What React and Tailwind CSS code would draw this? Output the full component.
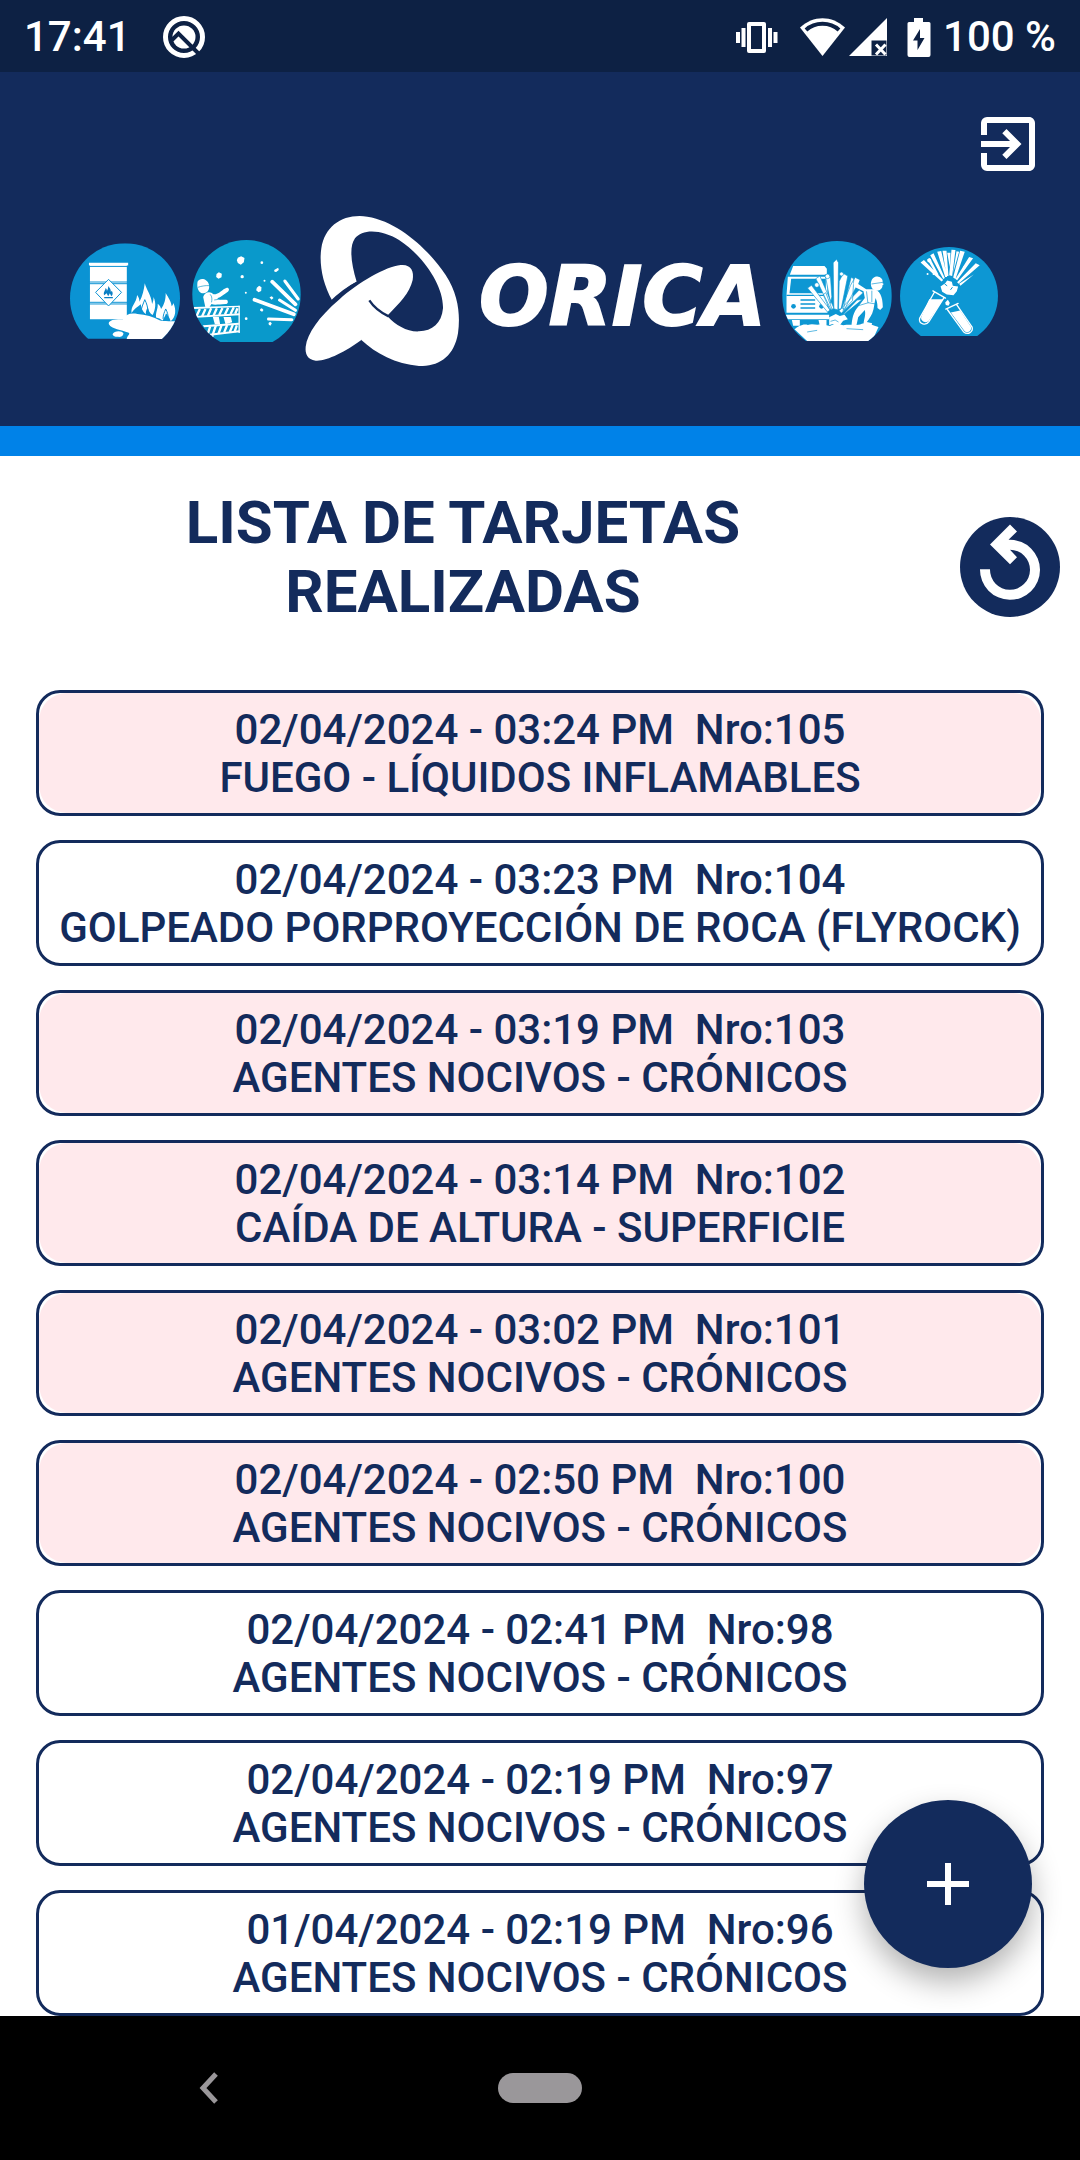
import { MdAdd, MdExitToApp } from "react-icons/md";

const cards = [
  { when: "02/04/2024 - 03:24 PM", nro: 105, name: "FUEGO - LÍQUIDOS INFLAMABLES", alert: true },
  { when: "02/04/2024 - 03:23 PM", nro: 104, name: "GOLPEADO PORPROYECCIÓN DE ROCA (FLYROCK)", alert: false },
  { when: "02/04/2024 - 03:19 PM", nro: 103, name: "AGENTES NOCIVOS - CRÓNICOS", alert: true },
  { when: "02/04/2024 - 03:14 PM", nro: 102, name: "CAÍDA DE ALTURA - SUPERFICIE", alert: true },
  { when: "02/04/2024 - 03:02 PM", nro: 101, name: "AGENTES NOCIVOS - CRÓNICOS", alert: true },
  { when: "02/04/2024 - 02:50 PM", nro: 100, name: "AGENTES NOCIVOS - CRÓNICOS", alert: true },
  { when: "02/04/2024 - 02:41 PM", nro: 98, name: "AGENTES NOCIVOS - CRÓNICOS", alert: false },
  { when: "02/04/2024 - 02:19 PM", nro: 97, name: "AGENTES NOCIVOS - CRÓNICOS", alert: false },
  { when: "01/04/2024 - 02:19 PM", nro: 96, name: "AGENTES NOCIVOS - CRÓNICOS", alert: false },
];

const NAVY = "#132b5c";
const STATUS = "#0d2144";

function StatusBar() {
  return (
    <div className="flex h-[72px] items-center justify-between bg-[#0d2144] px-6 pt-0.5 text-[42px] leading-[48px] font-medium text-white">
      <div className="flex items-center gap-8">
        <span>17:41</span>
        <svg width="42" height="42" viewBox="0 0 42 42" fill="none" aria-hidden="true">
          <circle cx="21" cy="21" r="18.5" stroke="#fff" strokeWidth="5" />
          <circle cx="21" cy="21" r="11.5" fill="#fff" />
          <path d="M9 24l6.500-6.500L37 39" stroke={STATUS} strokeWidth="4" />
        </svg>
      </div>
      <div className="flex items-center">
        <svg className="mr-[22px]" width="42" height="32" viewBox="0 0 42 32" fill="#fff" aria-hidden="true">
          <path d="M0 11h4v11H0zM5.500 7h4v19h-4zM32 7h4v19h-4zM37.500 11h4v11h-4z" />
          <path fillRule="evenodd" d="M13 1h15a2 2 0 0 1 2 2v27a2 2 0 0 1-2 2H13a2 2 0 0 1-2-2V3a2 2 0 0 1 2-2zM15 5v23h11V5z" />
        </svg>
        <svg className="mr-1" width="45" height="38" viewBox="0 0 45 38" aria-hidden="true">
          <path fill="#fff" d="M0 9.500C13-3 32-3 45 9.500L22.500 38z" />
          <path fill="none" stroke={STATUS} strokeWidth="4" d="M6 12C15 3.800 30 3.800 39 12" />
        </svg>
        <svg className="mr-5" width="38" height="38" viewBox="0 0 38 38" aria-hidden="true">
          <path fill="#fff" d="M38 0v38H0z" />
          <path fill={STATUS} d="M22.500 22.500H37.500V37.500H22.500z" />
          <path stroke="#fff" strokeWidth="3" d="M27 26.500l9.500 10M36.500 26.500l-9.500 10" />
        </svg>
        <svg className="mr-3" width="24" height="39" viewBox="0 0 24 39" aria-hidden="true">
          <path fill="#fff" d="M7 0h9v4h6a1.500 1.500 0 0 1 1.500 1.500v31.500A2 2 0 0 1 21.500 39h-19a2 2 0 0 1-2-2V5.500A1.500 1.500 0 0 1 2 4h5z" />
          <path fill={STATUS} d="M13 11v9h4.500L10.500 32v-9.500H6z" />
        </svg>
        <span>100 %</span>
      </div>
    </div>
  );
}

function FlammableBadge() {
  return (
    <svg width="110" height="96" viewBox="61 128 331 288" aria-hidden="true">
      <clipPath id="c1"><circle cx="226.500" cy="293.500" r="165.500" /></clipPath>
      <g clipPath="url(#c1)">
        <path fill="#0b93d3" d="M61 128h331v288H61z" />
        <g fill="#fff">
          <path d="M118 187h118v8h-4v162H121V195h-3z" />
          <path d="M178 372c-4-14 24-16 42-15 8-14 22-20 44-16 24 2 48 8 68 20 24 4 46 0 60 4l-50 52H232c-2-10 14-16 4-20-20-8-50-10-58-25z" />
          <path d="M189 402c4-10 28-12 33-2-2 10-10 11-18 10-8 0-13-2-15-8z" />
          <path d="M246 338c-2-22 14-28 17-54 5 7 7 13 7 20 10-18 13-34 16-55 6 22 20 36 22 62 3-6 5-14 4-21 10 18 5 40-2 54-10-4-12-14-15-22-5 7-6 14-6 20-10-8-14-20-15-30-10 8-20 14-28 26z" />
          <path d="M320 352c-2-16 6-26 5-42 6 5 9 10 10 16 10-14 14-28 14-48 9 16 16 24 18 40 3-3 4-6 5-10 9 20 8 42-8 55-4-12-9-18-14-24-2 8-7 14-10 22-8-4-12-8-20-9z" />
        </g>
        <path stroke="#0b93d3" strokeWidth="3" d="M118 198h118M118 245h118M118 250h118M118 306h118M118 311h118" />
        <path fill="#fff" stroke="#0b93d3" strokeWidth="3" d="M177 237l39 39-39 41-39-41z" />
        <path fill="#0b7fc4" d="M164 285c-4-10 4-14 4-22 4 3 4 6 4 9 4-6 4-10 4-15 5 6 8 10 8 18l3-4c4 8 3 12-2 17l-4-9-5 9-5-9zM164 290h26v4h-26z" />
        <path fill="none" stroke="#0b93d3" strokeWidth="3" d="M275 336c0-14 6-24 11-38 6 12 10 24 10 42M341 356c0-12 4-20 8-30 5 10 8 18 7 28" />
      </g>
    </svg>
  );
}

function FlyrockBadge() {
  return (
    <svg width="109" height="102" viewBox="426 121 326 306" aria-hidden="true">
      <clipPath id="c2"><circle cx="589" cy="284" r="163" /></clipPath>
      <g clipPath="url(#c2)">
        <path fill="#0999cb" d="M426 121h326v306H426z" />
        <g fill="#fff">
          <path d="M563 174l10-4 10 5-2 13-9 7-9-5-3-8zM499 223l7-5 9 4-1 11-9 4-7-5zM672 211l12-7 2 7-8 6-5-1zM620 264l7-6 7 5-1 11-8 4-7-6zM658 293l7-3 5 5-6 5zM630 328l5-2 5 5-4 5-6-3zM655 370l5-4 5 5-4 7-5-3z" />
          <circle cx="576" cy="231" r="5" /><circle cx="635" cy="189" r="4" /><circle cx="643" cy="243" r="3" /><circle cx="587" cy="279" r="3" /><circle cx="588" cy="357" r="4" />
          <path d="M442 246c8-14 30-8 34 8 4 14-4 27-16 27-14 0-21-15-18-35z" />
          <path d="M459 292c4-14 20-20 31-8 18 0 26-16 40-20 8 0 8 8 3 12-12 8-20 16-32 20 10 8 20 2 30 5 4 6 2 12-5 12-20 1-34 4-42 0l-8 12h-10z" />
          <path d="M488 352h18l4 22h-16zM520 352h22l4 16-20 6z" />
        </g>
        <path fill="none" stroke="#0999cb" strokeWidth="2" d="M443 263c12-4 24-6 34-5M480 284c6 6 6 16 4 24M492 301l20-3" />
        <path fill="#fff" d="M430 322l138-4v4l-136 6zM436 349l132-8v6l-130 7zM458 377l108-8v6l-104 8zM478 402l90-10v6l-88 10z" />
        <path stroke="#fff" strokeWidth="7" d="M449 328l-10 22M466 328l-10 22M483 326l-10 23M500 326l-10 22M517 325l-10 21M534 324l-10 21M551 323l-10 20M562 326l-7 16M480 380l-8 26M497 378l-9 26M514 377l-9 25M531 376l-9 22M548 375l-9 22M560 377l-7 20" />
        <path stroke="#fff" strokeWidth="4" d="M567 318v82M488 404v8" />
        <g stroke="#fff" strokeLinecap="round">
          <path strokeWidth="11" d="M666 246l70 68M613 300l118 44" />
          <path strokeWidth="9" d="M704 244l40 54M688 301l48 31M655 358l70 2" />
        </g>
      </g>
    </svg>
  );
}

function KnotLogo() {
  return (
    <svg width="154" height="150" viewBox="48 48 462 450" aria-hidden="true">
      <g fill="#fff">
        <path d="M130 302C100 250 90 190 97 145C108 75 165 40 235 50C330 65 420 150 470 225C510 285 514 350 507 400C495 470 450 500 390 498C320 492 260 460 217 420L243 303L297 350C320 375 355 396 390 394C430 393 458 370 462 325C464 255 400 165 330 120C280 88 220 85 198 115C180 140 186 190 203 245C180 258 150 280 130 302z" />
        <path d="M50 440C55 400 90 350 150 299C210 245 290 200 335 195C365 192 376 212 371 240C362 280 330 311 297 345L217 420C170 455 110 485 80 482C55 478 48 462 50 440z" />
      </g>
      <path fill="none" stroke={NAVY} strokeWidth="7" d="M124 308C148 284 176 262 208 246M241 301C252 318 276 338 299 349" />
    </svg>
  );
}

function TruckBadge() {
  return (
    <svg width="110" height="100" viewBox="33 39 329 300" aria-hidden="true">
      <clipPath id="c3"><circle cx="197.500" cy="203.500" r="164.500" /></clipPath>
      <g clipPath="url(#c3)">
        <path fill="#0d97d3" d="M33 39h329v300H33z" />
        <g fill="#fff">
          <path d="M66 114h94l7 8v18H56zM50 146h119v108H46v-52zM44 260h130v14H50zM62 276h24v17H66zM142 276h24v17h-20z" />
          <path d="M70 304c10-8 26-18 40-13 14-5 28 2 40-3l26 6 18-8 22 6c22-4 40 2 56-5 20-2 36 6 50 10l-20 44H110z" />
        </g>
        <path fill="#0d97d3" d="M60 152h104v44H55z" />
        <path stroke="#0d97d3" strokeWidth="4" d="M88 216h44M88 228h44M88 240h44M46 202h120" />
        <circle cx="67" cy="235" r="7" fill="#0d97d3" /><circle cx="151" cy="235" r="7" fill="#0d97d3" />
        <g fill="#fff" stroke="#0d97d3" strokeWidth="2">
          <path d="M186 104l10-10 6 10-2 142-12-4zM134 152l12-8 42 96-8 6zM109 180l12-8 56 74-8 6zM204 160l12-24 14 8-20 98-8 2zM224 210l16-62 8 4-4 66-28 30zM238 172l14-24 14 8-46 88-8-4zM264 186l12 8-66 62-6-8zM258 216l16-2-66 54zM156 200l8-6 18 48-6 4zM162 140l16 6 4 60-4 20z" />
          <circle cx="211" cy="138" r="6" /><circle cx="169" cy="145" r="7" /><circle cx="137" cy="171" r="7" />
        </g>
        <g fill="#fff">
          <path d="M174 268l20-10 12 6 14-4 10 14-14 4-10 14-22-4-10 4z" />
          <path d="M299 166c2-16 12-22 22-20 12 2 15 12 13 20l4 2-4 4c0 10-8 17-18 16-12-1-17-10-17-22z" />
          <path d="M247 166l8-14 10 4-4 12 24 16h24c16 4 26 20 26 54l-8 8-8-6c0-14-2-22-6-30l-6 34c-4 18-14 30-20 38l16 4-2 6-24 2c0-20 8-30 4-48l-20 22-6 28-14-2c2-24 6-38 14-50l26-34-4-20-28-14z" />
        </g>
        <path fill="none" stroke="#0d97d3" strokeWidth="2" d="M301 168l34-5M286 190l4 34 24 4M302 188v34M252 236l40-12M178 280l14-4 10 6M108 312l30-5M226 302l50 3" />
      </g>
    </svg>
  );
}

function ReactionBadge() {
  return (
    <svg width="98" height="89" viewBox="390 51 295 268" aria-hidden="true">
      <clipPath id="c4"><circle cx="537.500" cy="198.500" r="147.500" /></clipPath>
      <g clipPath="url(#c4)">
        <path fill="#0d97d3" d="M390 51h295v268H390z" />
        <g fill="#fff">
          <path d="M452 98l10-8 58 60-5 5zM481 76l10-6 34 74-5 3zM502 65l12-2 18 78h-6zM518 62h12l6 76h-6zM545 59l12 1-10 78-9-2zM571 62l14 3-28 82-7-4zM598 81l12 4-48 66-5-4zM618 100l12 6-64 56-4-5zM612 134l-44 28 4 6zM560 64l8 1-18 64zM532 68h10l-2 44zM472 88l8-4 26 50-4 4z" />
          <circle cx="473" cy="132" r="3" /><circle cx="491" cy="132" r="3" /><circle cx="478" cy="92" r="6" /><circle cx="596" cy="96" r="4" /><circle cx="584" cy="112" r="4" />
          <path d="M512 170l14-10 6-8 14 4 3 12 16 2-4 14-10 12-20-2-14-8z" />
          <path d="M526 218l8-8 6 10-4 8-8-2z" />
        </g>
        <g fill="none" stroke="#fff" strokeWidth="4" strokeLinejoin="round" strokeLinecap="round">
          <path d="M489 183l38 22M493 188l-44 78c-4 18 20 22 28 10l46-73M528 238l37-17M533 240l48 66c14 12 30 0 26-14l-46-67" />
        </g>
        <path fill="#fff" d="M478 208l42 0-44 66c-8 8-26 0-22-12zM543 248l28-6 33 50c2 14-12 20-20 12z" />
        <path stroke="#0d97d3" strokeWidth="3" d="M524 162l8 6M548 172l-6 8" />
      </g>
    </svg>
  );
}

function Header() {
  return (
    <header className="border-b-[30px] border-[#0082e8] bg-[#132b5c] pb-[60px] text-white">
      <div className="flex justify-end pt-9 pr-9">
        <button type="button" aria-label="Salir">
          <MdExitToApp size={72} />
        </button>
      </div>
      <div className="flex items-center justify-center pt-9 pr-3">
        <FlammableBadge />
        <div className="ml-3 flex"><FlyrockBadge /></div>
        <div className="ml-1 flex"><KnotLogo /></div>
        <span className="ml-5 pt-3 font-['DejaVu_Sans',sans-serif] text-[82px] leading-[90px] font-bold italic [-webkit-text-stroke:2px_white]">ORICA</span>
        <div className="ml-4 flex"><TruckBadge /></div>
        <div className="ml-2 flex"><ReactionBadge /></div>
      </div>
    </header>
  );
}

function Card({ card }) {
  return (
    <li>
      <button type="button" className="block w-full rounded-3xl border-3 border-[#132b5c] bg-white text-center">
        <span className={`block rounded-[28px] pt-[13px] pb-[11px] ${card.alert ? "bg-[#ffe9ec]" : "bg-white"}`}>
          <span className="block whitespace-pre">{`${card.when}  Nro:${card.nro}`}</span>
          <span className="block">{card.name}</span>
        </span>
      </button>
    </li>
  );
}

export default function App() {
  return (
    <div className="flex min-h-screen flex-col bg-white font-[Roboto,sans-serif] text-[#132b5c]">
      <StatusBar />
      <Header />
      <main className="relative flex-1">
        <div className="flex items-center pt-8 pr-5">
          <h1 className="flex-1 px-20 pb-5 text-center text-[60px] leading-[69px] font-bold">
            LISTA DE TARJETAS REALIZADAS
          </h1>
          <button type="button" aria-label="Actualizar" className="ml-[34px] rounded-full bg-[#132b5c]">
            <svg width="100" height="100" viewBox="0 0 100 100" aria-hidden="true">
              <path fill="#fff" d="M30 27.500L50 7.500l7 7-8.500 8.300H50a30 30 0 1 1-30 29.500h10a20 20 0 1 0 20-19.500l7 7.500-7 7z" />
            </svg>
          </button>
        </div>
        <ul className="flex flex-col gap-6 px-9 pt-11 text-[42px] leading-[48px] font-medium">
          {cards.map((card) => (
            <Card key={card.nro} card={card} />
          ))}
        </ul>
        <button
          type="button"
          aria-label="Agregar tarjeta"
          className="absolute right-12 bottom-12 flex size-[168px] items-center justify-center rounded-full bg-[#132b5c] text-white shadow-[0_14px_30px_rgba(0,0,0,0.3)]"
        >
          <MdAdd size={72} />
        </button>
      </main>
      <nav className="grid h-36 grid-cols-[1fr_84px_1fr] items-center bg-black">
        <div className="flex justify-center pr-20">
          <button type="button" aria-label="Atrás">
            <svg width="20" height="32" viewBox="0 0 20 32" fill="none" aria-hidden="true">
              <path d="M17 2L4 16l13 14" stroke="#9a979a" strokeWidth="5" />
            </svg>
          </button>
        </div>
        <button type="button" aria-label="Inicio" className="h-[30px] rounded-full bg-[#9a979a]" />
      </nav>
    </div>
  );
}
